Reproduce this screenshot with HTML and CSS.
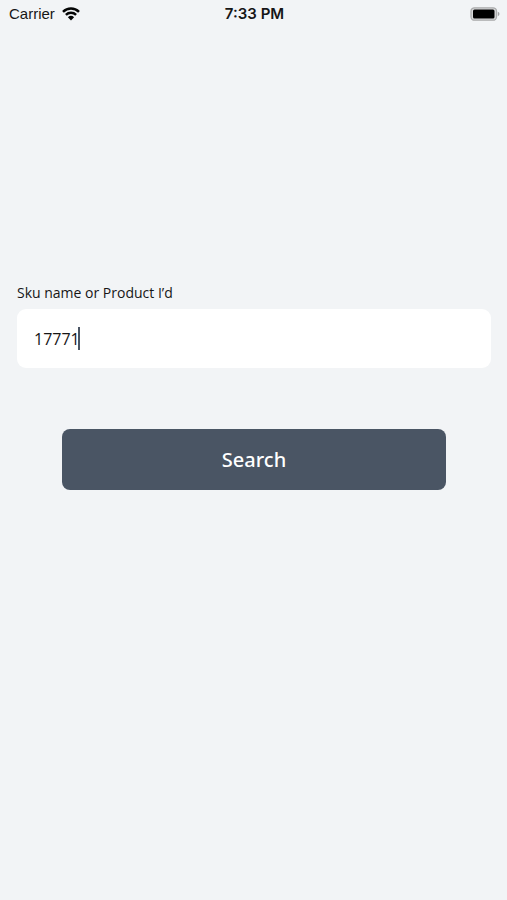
FILE: index.html
```html
<!DOCTYPE html>
<html lang="en">
<head>
<meta charset="utf-8">
<meta name="viewport" content="width=device-width, initial-scale=1">
<title>Product search</title>
<link rel="stylesheet" href="styles.css">
</head>
<body>
<header class="status">
  <div class="status-left">
    <span class="carrier">Carrier</span>
    <svg class="wifi" viewBox="0 0 18 14" aria-hidden="true">
      <path d="M1 4.8a11.5 11.5 0 0 1 16 0M3.9 7.9a7.4 7.4 0 0 1 10.2 0" fill="none" stroke="#050505" stroke-width="2.5"/>
      <path d="M9 13.4L5.9 10.3a4.5 4.5 0 0 1 6.2 0z" fill="#050505"/>
    </svg>
  </div>
  <time class="clock">7:33 PM</time>
  <svg class="battery" viewBox="0 0 30 14" aria-hidden="true">
    <rect x="1" y="0.8" width="25.5" height="12.4" rx="3.5" fill="#d8d9da" stroke="#aaabac" stroke-width="1.3"/>
    <rect x="3" y="2.5" width="21.5" height="9" rx="1.5" fill="#000"/>
    <path d="M27.8 4.8q1.7.6 1.7 2.2t-1.7 2.2z" fill="#a0a1a3"/>
  </svg>
</header>
<main>
  <form class="search">
    <label class="label" for="sku">Sku name or Product I’d</label>
    <input class="field" id="sku" type="text" value="17771" autocomplete="off">
    <span class="caret"></span>
    <button class="submit" type="button">Search</button>
  </form>
</main>
</body>
</html>
```
FILE: styles.css
```css
* { box-sizing: border-box; }
body {
  margin: 0;
  min-height: 100vh;
  background: #f2f4f6;
  color: #161616;
  font-family: "Open Sans", "Noto Sans", sans-serif;
}
.status {
  display: grid;
  grid-template-columns: 1fr auto 1fr;
  align-items: center;
  height: 28px;
  padding: 0 7px 0 9px;
  font: 15px/20px Inter, sans-serif;
}
.status-left { display: flex; align-items: center; gap: 7px; }
.carrier { font-family: "Liberation Sans", sans-serif; }
.wifi { width: 18px; height: 14px; }
.clock { font-weight: 600; }
.battery { width: 30px; height: 14px; justify-self: end; }
.search {
  position: relative;
  display: flex;
  flex-direction: column;
  padding: 255px 16px 0 17px;
}
.label { font-size: 14px; line-height: 20px; margin-bottom: 6px; }
.field {
  width: 100%;
  height: 59px;
  padding: 0 17px;
  border: 0;
  border-radius: 9px;
  outline: 0;
  background: #fff;
  color: #161616;
  font: 16px "Open Sans", "Noto Sans", sans-serif;
}
.caret {
  position: absolute;
  left: 78px;
  top: 299px;
  width: 2px;
  height: 23px;
  background: #4a5564;
}
.submit {
  height: 61px;
  margin: 61px 45px 0;
  border: 0;
  border-radius: 8px;
  background: #4a5564;
  color: #fff;
  font: 500 20px "Noto Sans", sans-serif;
}
```
